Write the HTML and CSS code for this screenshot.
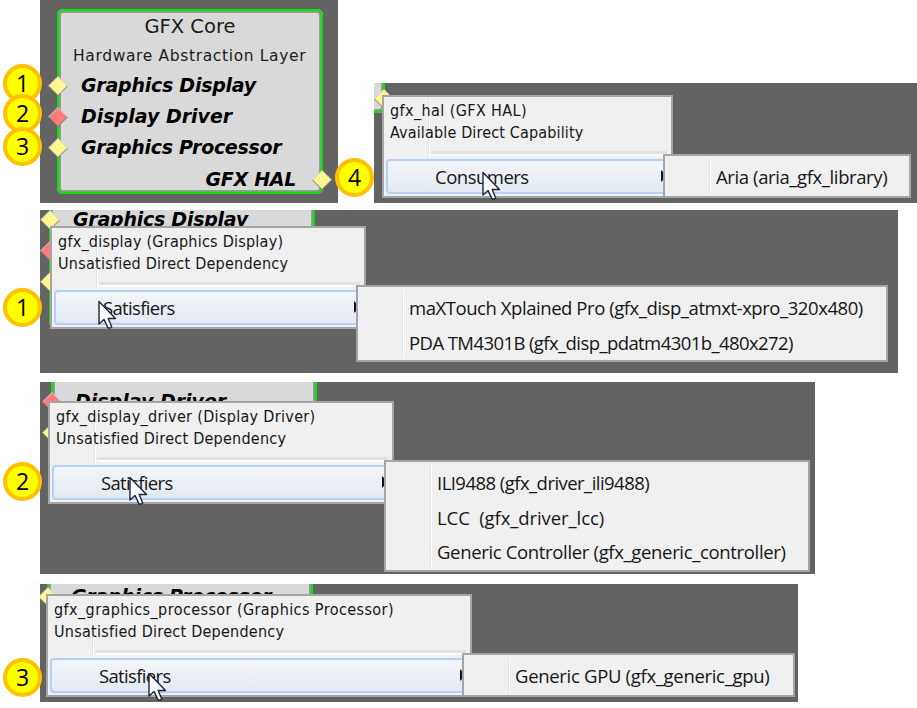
FILE: index.html
```html
<!DOCTYPE html>
<html lang="en">
<head>
<meta charset="utf-8">
<title>GFX Core</title>
<link rel="stylesheet" href="styles.css">
</head>
<body>
<svg class="defs" width="0" height="0">
  <symbol id="cursor" viewBox="0 0 20 30"><path d="M1 1.5V24l5-4.6 3.9 8.2q1.6 1.2 3.8-.6L10.200 18.500H17.500Z" fill="#fff" stroke="#20243a" stroke-width="1.400" stroke-linejoin="round"/></symbol>
  <symbol id="port" viewBox="0 0 20 20"><path d="M10 .5 19.500 10 10 19.500.5 10Z" fill="currentColor"/><path d="M.5 10 10 .5 19.500 10" fill="none" stroke="#d4d4c8"/><path d="M.5 10 10 19.500 19.500 10" fill="none" stroke="#777"/></symbol>
</svg>
<main class="page">
  <div class="top-row">
    <section class="canvas canvas-core">
      <div class="node node-core">
        <h1 class="title">GFX Core</h1>
        <h2 class="subtitle">Hardware Abstraction Layer</h2>
        <div class="port row-1"><svg class="pin yellow"><use href="#port"/></svg><span class="gd">Graphics Display</span></div>
        <div class="port row-2"><svg class="pin red"><use href="#port"/></svg><span class="dd">Display Driver</span></div>
        <div class="port row-3"><svg class="pin yellow"><use href="#port"/></svg><span class="gp">Graphics Processor</span></div>
        <div class="port row-4 out"><span class="gh">GFX HAL</span><svg class="pin yellow"><use href="#port"/></svg></div>
      </div>
    </section>
    <section class="canvas canvas-hal">
      <div class="node node-hal">
        <div class="port row-4 out"><svg class="pin yellow"><use href="#port"/></svg></div>
      </div>
      <div class="menu menu-hal">
        <p class="caption c1">gfx_hal (GFX HAL)</p>
        <p class="caption c2">Available Direct Capability</p>
        <div class="item"><span class="consumers">Consumers</span></div>
        <i class="arrow"></i>
        <svg class="cursor"><use href="#cursor"/></svg>
        <div class="submenu"><p class="s1">Aria (aria_gfx_library)</p></div>
      </div>
    </section>
  </div>
  <section class="canvas canvas-display">
    <div class="node node-display">
      <div class="port row-1"><svg class="pin yellow"><use href="#port"/></svg><span class="gd">Graphics Display</span></div>
      <div class="port row-2"><svg class="pin red"><use href="#port"/></svg></div>
      <div class="port row-3"><svg class="pin yellow"><use href="#port"/></svg></div>
    </div>
    <div class="menu menu-display">
      <p class="caption c3">gfx_display (Graphics Display)</p>
      <p class="caption c4">Unsatisfied Direct Dependency</p>
      <div class="item"><span class="satisfiers">Satisfiers</span></div>
      <i class="arrow"></i>
      <svg class="cursor"><use href="#cursor"/></svg>
      <div class="submenu"><p class="s2">maXTouch Xplained Pro (gfx_disp_atmxt-xpro_320x480)</p><p class="s3">PDA TM4301B (gfx_disp_pdatm4301b_480x272)</p></div>
    </div>
  </section>
  <section class="canvas canvas-driver">
    <div class="node node-driver">
      <div class="port row-2"><svg class="pin red"><use href="#port"/></svg><span class="dd">Display Driver</span></div>
      <div class="port row-3"><svg class="pin yellow"><use href="#port"/></svg></div>
    </div>
    <div class="menu menu-driver">
      <p class="caption c5">gfx_display_driver (Display Driver)</p>
      <p class="caption c4">Unsatisfied Direct Dependency</p>
      <div class="item"><span class="satisfiers">Satisfiers</span></div>
      <i class="arrow"></i>
      <svg class="cursor"><use href="#cursor"/></svg>
      <div class="submenu"><p class="s4">ILI9488 (gfx_driver_ili9488)</p><p class="s5">LCC&nbsp; (gfx_driver_lcc)</p><p class="s6">Generic Controller (gfx_generic_controller)</p></div>
    </div>
  </section>
  <section class="canvas canvas-processor">
    <div class="node node-processor">
      <div class="port row-3"><svg class="pin yellow"><use href="#port"/></svg><span class="gp">Graphics Processor</span></div>
    </div>
    <div class="menu menu-processor">
      <p class="caption c6">gfx_graphics_processor (Graphics Processor)</p>
      <p class="caption c4">Unsatisfied Direct Dependency</p>
      <div class="item"><span class="satisfiers">Satisfiers</span></div>
      <i class="arrow"></i>
      <svg class="cursor"><use href="#cursor"/></svg>
      <div class="submenu"><p class="s7">Generic GPU (gfx_generic_gpu)</p></div>
    </div>
  </section>
  <b class="badge b1">1</b><b class="badge b2">2</b><b class="badge b3">3</b><b class="badge b4">4</b>
  <b class="badge b5">1</b><b class="badge b6">2</b><b class="badge b7">3</b>
</main>
</body>
</html>
```
FILE: styles.css
```css
* { box-sizing: border-box; }
body { margin: 0; background: #fff; }
h1, h2, p { margin: 0; font-weight: 400; }
svg { display: block; }
.defs { position: absolute; }

.page { position: relative; width: 917px; height: 708px; padding-left: 40px; overflow: hidden; }
.top-row { display: flex; gap: 36px; height: 203px; margin-bottom: 7px; }
.canvas { position: relative; overflow: hidden; background: #636363; }
.canvas-core { width: 298px; }
.canvas-hal { width: 543px; margin-top: 83px; }
.canvas-display { width: 858px; height: 163px; margin-bottom: 9px; }
.canvas-driver { width: 775px; height: 192px; margin-bottom: 10px; }
.canvas-processor { width: 758px; height: 118px; }

/* Diagram node */
.node {
  position: absolute; width: 266px; height: 185px; border-radius: 6px; background: #d9d9d9;
  box-shadow: inset 0 0 0 2.5px #14dc14, inset 0 0 0 4px #a294a4;
  display: grid; grid-template-rows: 31px 30px repeat(4, 31px);
  font-family: "DejaVu Sans", Verdana, sans-serif; color: #1c1c1c; white-space: nowrap;
}
.node-core { left: 17px; top: 9px; }
.node-hal { left: -255px; top: -155px; }
.node-display { left: 9px; top: -67px; }
.node-driver { left: 11px; top: -88px; }
.node-processor { left: 7px; top: -126px; }
.title { grid-row: 1; font-size: 19.500px; line-height: 35px; text-align: center; }
.subtitle { grid-row: 2; font-size: 15.500px; line-height: 32px; padding-left: 16px; letter-spacing: .64px; }
.port { display: flex; align-items: center; gap: 13px; margin-left: -9px; font: italic 700 19px/31px "DejaVu Sans", Verdana, sans-serif; color: #000; }
.port.out { justify-content: flex-end; margin: 1px -9px -1px 0; gap: 16px; }
.gd { letter-spacing: -.25px; }
.gp, .gh { letter-spacing: -.29px; }
.row-1 { grid-row: 3; } .row-2 { grid-row: 4; } .row-3 { grid-row: 5; } .row-4 { grid-row: 6; }
.pin { width: 20px; height: 20px; flex: none; }
.yellow { color: #fff68f; }
.red { color: #ff7b7b; }

/* Context menu */
.menu {
  position: absolute; height: 103px; padding: 3px 0 0 2px; border: 2px solid #a5a5a5;
  background: linear-gradient(#e2e2e2, #e2e2e2) 44px 2px / 1px 94px no-repeat, linear-gradient(#fff, #fff) 45px 2px / 1px 94px no-repeat, #f0f0f0;
  color: #161616; white-space: nowrap;
}
.menu-hal { left: 8px; top: 12px; width: 291px; }
.menu-display { left: 10px; top: 16px; width: 316px; }
.menu-driver { left: 8px; top: 19px; width: 346px; }
.menu-processor { left: 6px; top: 10px; width: 426px; }
.caption { font: 16px/22px "DejaVu Sans Condensed", Tahoma, sans-serif; padding-left: 4px; }
.c1 { letter-spacing: .4px; }
.c2 { letter-spacing: .15px; }
.c3 { letter-spacing: .24px; }
.c4 { letter-spacing: .25px; }
.c5 { letter-spacing: .32px; }
.c6 { letter-spacing: .42px; }
.item {
  position: relative; height: 35px; margin-top: 15px; padding-left: 47px; border: 2px solid #b3d3f6; border-right: 0; border-radius: 4px 0 0 4px;
  background: linear-gradient(rgba(243, 245, 248, .9), rgba(226, 233, 243, .9)); font: 18.500px/32px "Open Sans", "Segoe UI", sans-serif;
}
.item::before { content: ""; position: absolute; left: 43px; right: 4px; top: -10px; height: 3px; background: #e2e2e2; border-bottom: 2px solid #fafafa; }
.consumers { letter-spacing: -.5px; }
.satisfiers { letter-spacing: -.65px; }
.arrow { position: absolute; right: 4px; top: 73px; border: 6px solid transparent; border-left: 6px solid #111; border-right: 0; }
.cursor { position: absolute; width: 20px; height: 30px; }
.menu-hal .cursor { left: 98px; top: 74px; }
.menu-display .cursor { left: 46px; top: 72px; }
.menu-driver .cursor { left: 79px; top: 73px; }
.menu-processor .cursor { left: 100px; top: 76px; }
.submenu {
  position: absolute; left: calc(100% - 8px); top: 57px; padding: 4px 0 2px 51px; border: 2px solid #a5a5a5;
  background: linear-gradient(90deg, #e2e2e2 1px, #fff 1px) 44px 2px / 2px calc(100% - 4px) no-repeat, #f0f0f0;
  font: 18.500px/34.500px "Open Sans", "Segoe UI", sans-serif;
}
.menu-hal .submenu { width: 248px; height: 44px; }
.menu-display .submenu { width: 532px; height: 77px; }
.menu-driver .submenu { width: 426px; height: 112px; }
.menu-processor .submenu { width: 333px; height: 44px; }
.s1 { letter-spacing: -.39px; }
.s2 { letter-spacing: -.44px; }
.s3 { letter-spacing: -.58px; }
.s4 { letter-spacing: -.54px; }
.s5 { letter-spacing: -.08px; }
.s6 { letter-spacing: -.34px; }
.s7 { letter-spacing: -.31px; }

/* Numbered callouts */
.badge {
  position: absolute; left: 3px; width: 39px; height: 39px; border: 4px solid #ffc000; border-radius: 50%; background: #ff0;
  font: 400 23px/31px "Open Sans", Calibri, sans-serif; color: #000; text-align: center;
}
.b1 { top: 64px; } .b2 { top: 94px; } .b3 { top: 127px; } .b4 { top: 158px; left: 335px; }
.b5 { top: 288px; } .b6 { top: 462px; } .b7 { top: 658px; }
```
